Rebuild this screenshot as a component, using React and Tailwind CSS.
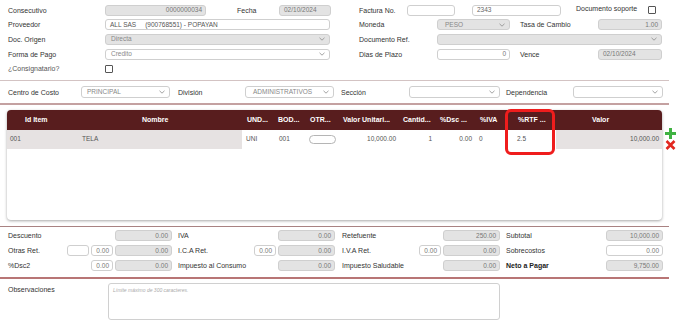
import React from "react";

const Chevron = () => (
  <svg width="6" height="4" viewBox="0 0 6 4" className="shrink-0">
    <path d="M0.5 0.8 L3 3.2 L5.5 0.8" fill="none" stroke="#8a8a8a" strokeWidth="0.8" />
  </svg>
);

const Field = ({ w, gray, children, right, className = "", h = "h-[11px]", color = "text-[#777]" }) => (
  <div
    className={`${w} ${h} shrink-0 rounded-[3px] border border-[#cfcfcf] ${gray ? "bg-[#e3e3e3]" : "bg-white"} flex items-center ${right ? "justify-end pr-[3px]" : "pl-[4px]"} text-[6.5px] ${color} leading-none whitespace-pre overflow-hidden ${className}`}
  >
    {children}
  </div>
);

const Select = ({ w, gray, children, pl = "pl-[5px]", color = "text-[#888]", h = "h-[11px]" }) => (
  <div
    className={`${w} ${h} shrink-0 rounded-[3px] border border-[#cfcfcf] ${gray ? "bg-[#e3e3e3]" : "bg-white"} flex items-center justify-between ${pl} pr-[4px] text-[6.5px] ${color} leading-none whitespace-pre`}
  >
    <span>{children}</span>
    <Chevron />
  </div>
);

const Label = ({ w, children, className = "" }) => (
  <div className={`${w} shrink-0 text-[7px] text-[#333] leading-none whitespace-pre ${className}`}>{children}</div>
);

const Check = ({ className = "" }) => (
  <div className={`w-[8px] h-[8px] border border-[#555] rounded-[1px] bg-white shrink-0 ${className}`} />
);

const Row = ({ children, className = "" }) => (
  <div className={`flex items-center h-[14.6px] ${className}`}>{children}</div>
);

const cols = [
  { w: "w-[73px]", h: "Id Item", hp: "pl-[18px]", bg: true, d: "001", dp: "pl-[3px]" },
  { w: "w-[162px]", h: "Nombre", hp: "pl-[62px]", bg: true, d: "TELA", dp: "pl-[2px]" },
  { w: "w-[32px]", h: "UND...", hp: "pl-[5px]", d: "UNI", dp: "pl-[4px]" },
  { w: "w-[32px]", h: "BOD...", hp: "pl-[4px]", d: "001", dp: "pl-[5px]" },
  { w: "w-[34px]", h: "OTR...", hp: "pl-[4px]", pill: true },
  { w: "w-[60px]", h: "Valor Unitari...", hp: "pl-[3px]", d: "10,000.00", dp: "pr-[4px]", right: true },
  { w: "w-[36px]", h: "Cantid...", hp: "pl-[3px]", d: "1", dp: "pr-[4px]", right: true },
  { w: "w-[40px]", h: "%Dsc ...", hp: "pl-[4px]", d: "0.00", dp: "pr-[4px]", right: true },
  { w: "w-[30px]", h: "%IVA", hp: "pl-[4px]", d: "0", dp: "pl-[3px]" },
  { w: "w-[50px]", h: "%RTF ...", hp: "pl-[12px]", d: "2.5", dp: "pl-[11px]" },
  { w: "w-[106px]", h: "Valor", hp: "pl-[36px]", bg: true, d: "10,000.00", dp: "pr-[3px]", right: true },
];

const BLabel = ({ children, bold }) => (
  <div className={`flex-1 text-[7px] ${bold ? "font-bold text-[#222]" : "text-[#333]"} leading-none whitespace-pre`}>{children}</div>
);

const small = (t) => (
  <Field w="w-[22px]" right h="h-[11px]">{t}</Field>
);

export default function App() {
  return (
    <div className="w-[688px] h-[335px] bg-white overflow-hidden" style={{ fontFamily: '"Liberation Sans", Arial, sans-serif' }}>
      {/* Top section */}
      <div className="flex pt-[3px]">
        <div className="w-[359px] pl-[8px] shrink-0">
          <Row>
            <Label w="w-[97px]">Consecutivo</Label>
            <Field w="w-[101px]" gray right>0000000034</Field>
            <Label w="w-[42px]" className="pl-[31px] box-content">Fecha</Label>
            <Field w="w-[52px]" gray>02/10/2024</Field>
          </Row>
          <Row>
            <Label w="w-[97px]">Proveedor</Label>
            <Field w="w-[225px]" color="text-[#555]">{"ALL SAS     (900768551) - POPAYAN"}</Field>
          </Row>
          <Row>
            <Label w="w-[97px]">Doc. Origen</Label>
            <Select w="w-[225px]" gray>Directa</Select>
          </Row>
          <Row>
            <Label w="w-[97px]">Forma de Pago</Label>
            <Select w="w-[225px]">Credito</Select>
          </Row>
          <Row>
            <Label w="w-[97px]" className="text-[#555]">¿Consignatario?</Label>
            <Check />
          </Row>
        </div>
        <div className="flex-1">
          <Row>
            <Label w="w-[48px]">Factura No.</Label>
            <Field w="w-[48px]"></Field>
            <div className="w-[17px] shrink-0" />
            <Field w="w-[89px]" color="text-[#666]">2343</Field>
            <Label w="w-[72px]" className="pl-[15px] box-content mb-[3px]">Documento soporte</Label>
            <Check className="mb-[1px]" />
          </Row>
          <Row>
            <Label w="w-[78px]">Moneda</Label>
            <Select w="w-[73px]" gray pl="pl-[7px]">PESO</Select>
            <Label w="w-[78px]" className="pl-[10px] box-content">Tasa de Cambio</Label>
            <Field w="w-[64px]" gray right>1.00</Field>
          </Row>
          <Row>
            <Label w="w-[78px]">Documento Ref.</Label>
            <Select w="w-[225px]" gray>{""}</Select>
          </Row>
          <Row>
            <Label w="w-[78px]">Dias de Plazo</Label>
            <Field w="w-[73px]" right>0</Field>
            <Label w="w-[78px]" className="pl-[10px] box-content">Vence</Label>
            <Field w="w-[64px]" gray>02/10/2024</Field>
          </Row>
        </div>
      </div>

      <div className="mt-[4px] w-[669px] h-[1.5px] bg-[#d3c3c3]" />

      {/* Cost center row */}
      <div className="flex items-center h-[22px] pl-[8px]">
        <Label w="w-[73px]">Centro de Costo</Label>
        <Select w="w-[89px]" h="h-[12px]">PRINCIPAL</Select>
        <Label w="w-[67px]" className="pl-[8px] box-content">División</Label>
        <Select w="w-[89px]" h="h-[12px]" pl="pl-[7px]">ADMINISTRATIVOS</Select>
        <Label w="w-[68px]" className="pl-[7px] box-content">Sección</Label>
        <Select w="w-[91px]" h="h-[12px]">{""}</Select>
        <Label w="w-[67px]" className="pl-[6px] box-content">Dependencia</Label>
        <Select w="w-[90px]" h="h-[12px]">{""}</Select>
      </div>

      <div className="w-[669px] h-[1.5px] bg-[#c4a1a1]" />

      {/* Table */}
      <div className="flex mt-[5px] pl-[7px]">
        <div className="relative w-[655px] h-[110px] rounded-[4px] bg-white shadow-[0_1px_3px_rgba(0,0,0,0.35)] overflow-visible">
          <div className="flex h-[20px] bg-[#581d1e] rounded-t-[4px] items-center">
            {cols.map((c, i) => (
              <div key={i} className={`${c.w} ${c.hp} shrink-0 text-[7px] font-bold text-white leading-none whitespace-pre`}>{c.h}</div>
            ))}
          </div>
          <div className="flex h-[19px]">
            {cols.map((c, i) => (
              <div
                key={i}
                className={`${c.w} ${c.dp || ""} shrink-0 h-full flex items-center ${c.right ? "justify-end" : ""} ${c.bg ? "bg-[#e6e2e2]" : "bg-white"} text-[6.5px] text-[#555] leading-none`}
              >
                {c.pill ? (
                  <div className="ml-[3px] w-[27px] h-[9px] rounded-full border border-[#b5b5b5] bg-white" />
                ) : (
                  c.d
                )}
              </div>
            ))}
          </div>
          <div className="absolute left-[498px] top-[-1px] w-[50px] h-[46px] border-[3px] border-[#ef1d1d] rounded-[6px]" />
        </div>
        <div className="flex flex-col pl-[3px] pt-[18px] gap-[1px]">
          <svg width="11" height="11" viewBox="0 0 11 11">
            <rect x="4" y="0" width="3" height="11" fill="#3fb242" />
            <rect x="0" y="4" width="11" height="3" fill="#3fb242" />
          </svg>
          <svg width="11" height="10" viewBox="0 0 11 10">
            <path d="M1.5 1 L9.5 9 M9.5 1 L1.5 9" stroke="#e2271f" strokeWidth="2.6" />
          </svg>
        </div>
      </div>

      <div className="mt-[6px] w-[669px] h-[1.5px] bg-[#a98282]" />

      {/* Totals */}
      <div className="mt-[1px] pl-[8px]">
        {[
          [
            { l: "Descuento", items: [] , v: "0.00"},
            { l: "IVA", items: [], v: "0.00" },
            { l: "Retefuente", items: [], v: "250.00" },
            { l: "Subtotal", items: [], v: "10,000.00", wide: true },
          ],
          [
            { l: "Otras Ret.", items: ["", "0.00"], v: "0.00" },
            { l: "I.C.A Ret.", items: ["0.00"], v: "0.00" },
            { l: "I.V.A Ret.", items: ["0.00"], v: "0.00" },
            { l: "Sobrecostos", items: [], v: "0.00", wide: true, white: true },
          ],
          [
            { l: "%Dsc2", items: ["0.00"], v: "0.00" },
            { l: "Impuesto al Consumo", items: [], v: "0.00" },
            { l: "Impuesto Saludable", items: [], v: "0.00" },
            { l: "Neto a Pagar", items: [], v: "9,750.00", wide: true, bold: true },
          ],
        ].map((row, ri) => (
          <div key={ri} className="flex items-center h-[15px]">
            {row.map((c, ci) => (
              <div
                key={ci}
                className={`flex items-center shrink-0 ${ci === 0 ? "w-[164px] mr-[6px]" : ci === 1 ? "w-[157px] mr-[7px]" : ci === 2 ? "w-[158px] mr-[6px]" : "w-[157px]"}`}
              >
                <BLabel bold={c.bold}>{c.l}</BLabel>
                <div className="flex items-center gap-[2px]">
                  {c.items.map((t, k) => (
                    <React.Fragment key={k}>{small(t)}</React.Fragment>
                  ))}
                  <Field w="w-[57px]" gray={!c.white} right color="text-[#777]">{c.v}</Field>
                </div>
              </div>
            ))}
          </div>
        ))}
      </div>

      <div className="mt-[4px] w-[669px] h-[1.5px] bg-[#b87575]" />

      <div className="flex mt-[4px] pl-[8px]">
        <div className="w-[100px] shrink-0 pt-[3px] text-[7px] text-[#333] leading-none">Observaciones</div>
        <div className="w-[392px] h-[37px] rounded-[3px] border border-[#d0d0d0] bg-white pl-[4px] pt-[4px] text-[5px] italic text-[#aaa] leading-none">
          Límite máximo de 300 caracteres.
        </div>
      </div>
    </div>
  );
}
